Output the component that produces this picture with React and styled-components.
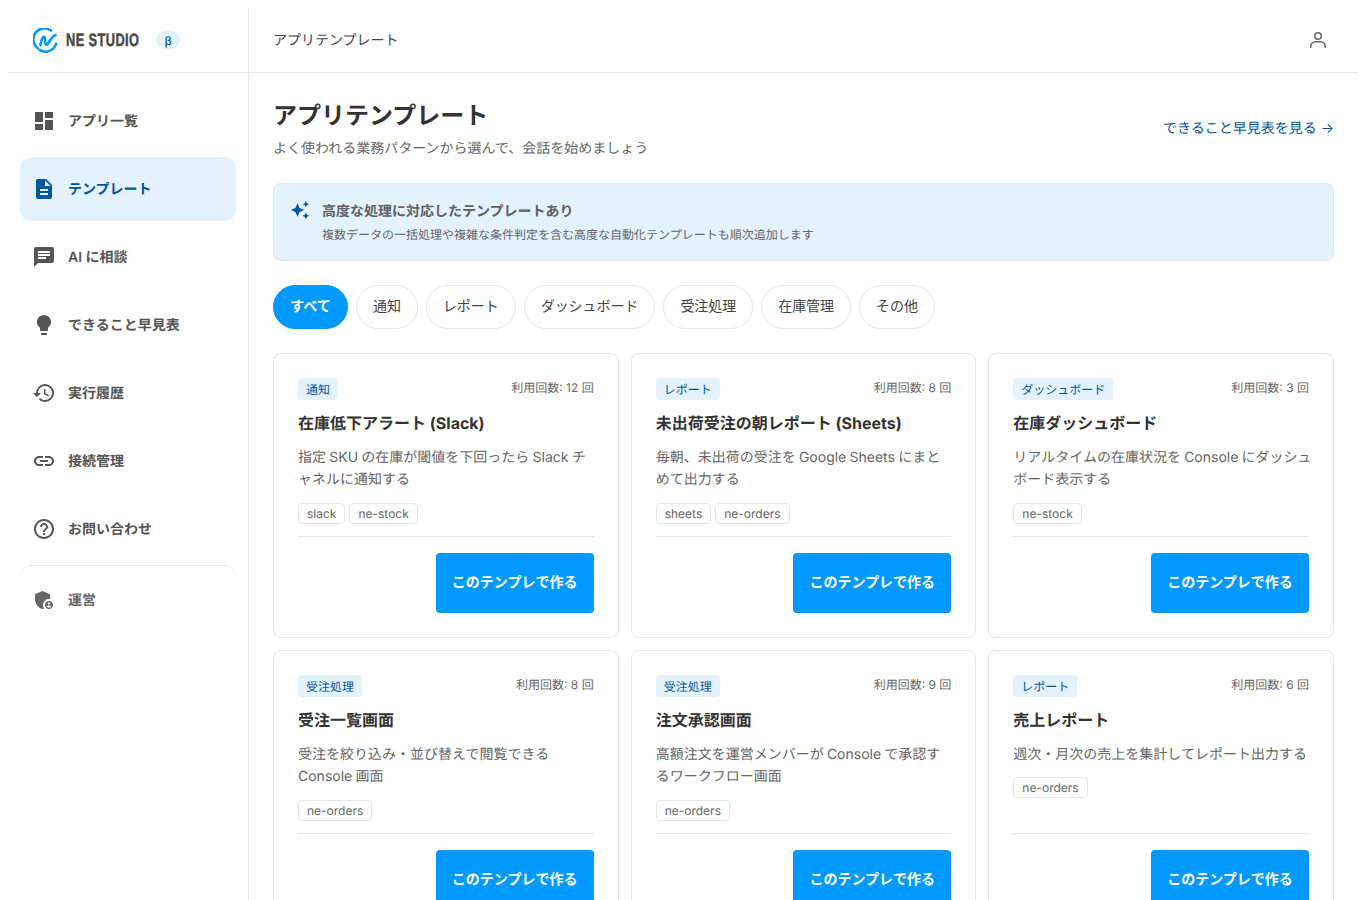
import React from 'react'
import styled, { createGlobalStyle } from 'styled-components'
import { MdDashboard, MdDescription, MdChat, MdLightbulb, MdHistory, MdLink, MdHelpOutline, MdAdminPanelSettings, MdAutoAwesome } from 'react-icons/md'

const GlobalStyle = createGlobalStyle`
  html, body {
    background: #ffffff;
    overflow: hidden;
  }
  body {
    margin: 8px 8px 0;
    font-family: Inter, "Noto Sans CJK JP", sans-serif;
    color: #333333;
    text-rendering: geometricPrecision;
  }
  * { box-sizing: border-box; }
`

const Shell = styled.div`
  display: flex;
  height: calc(100vh - 8px);
  overflow: hidden;
`
const Sidebar = styled.aside`
  flex: 0 0 241px;
  border-right: 1px solid #dfe6ec;
`
const LogoBar = styled.div`
  display: flex;
  align-items: center;
  height: 65px;
  padding-left: 25px;
  border-bottom: 1px solid #dfe6ec;
`
const LogoText = styled.span`
  display: inline-block;
  width: 73px;
  margin-left: 8px;
  font-family: "Liberation Sans", sans-serif;
  font-size: 18px;
  font-weight: 700;
  letter-spacing: 0.6px;
  white-space: nowrap;
  color: #4a4a4a;
  -webkit-text-stroke: 0.5px #4a4a4a;
  transform: scaleX(0.71);
  transform-origin: left center;
`
const Beta = styled.span`
  display: flex;
  align-items: center;
  justify-content: center;
  width: 24px;
  height: 18px;
  margin-left: 17px;
  border-radius: 9px;
  background: #e3f2fd;
  color: #01579b;
  font-size: 12px;
  font-weight: 500;
`
const Nav = styled.nav`
  display: flex;
  flex-direction: column;
  gap: 4px;
  padding: 16px 12px 0;
`
const NavItem = styled.div`
  display: flex;
  align-items: center;
  gap: 12px;
  height: 64px;
  padding-left: 12px;
  border-radius: 12px;
  font-size: 14px;
  font-weight: 600;
  background: ${p => (p.$active ? '#e3f2fd' : 'transparent')};
  color: ${p => (p.$active ? '#01579b' : '#555555')};
  svg { flex: none; width: 24px; height: 24px; }
  span { margin-bottom: 1px; }
`
const AdminBlock = styled.div`
  padding-top: 2px;
  border-top: 1px solid #dfe6ec;
  border-radius: 12px;
  ${NavItem} { color: #666666; }
`
const Main = styled.main`
  flex: 1;
  min-width: 0;
`
const TopBar = styled.header`
  display: flex;
  align-items: center;
  justify-content: space-between;
  height: 65px;
  padding: 0 28px 0 24px;
  border-bottom: 1px solid #dfe6ec;
  font-size: 14px;
  color: #444444;
  span { margin-bottom: 1px; }
`
const Content = styled.div`
  padding: 24px;
`
const PageHead = styled.div`
  display: flex;
  align-items: center;
  justify-content: space-between;
`
const PageTitle = styled.h1`
  margin: 1px 0 4px;
  font-size: 24px;
  line-height: 36px;
  font-weight: 700;
  color: #333333;
`
const PageSub = styled.p`
  margin: 0;
  font-size: 14px;
  line-height: 22px;
  color: #666666;
`
const HeadLink = styled.a`
  margin-bottom: 1px;
  font-size: 14px;
  font-weight: 400;
  color: #01579b;
  text-decoration: none;
`
const Banner = styled.div`
  display: flex;
  align-items: flex-start;
  gap: 12px;
  height: 78px;
  margin-top: 23px;
  padding: 17px 16px 0;
  border: 1px solid #dfe6ec;
  border-radius: 8px;
  background: #e3f2fd;
  svg { flex: none; width: 20px; height: 20px; margin-top: -1px; color: #01579b; }
`
const BannerTitle = styled.div`
  font-size: 14px;
  line-height: 22px;
  font-weight: 700;
  color: #616161;
`
const BannerText = styled.div`
  margin-top: 2px;
  font-size: 12px;
  line-height: 20px;
  color: #666666;
`
const Filters = styled.div`
  display: flex;
  gap: 8px;
  margin: 24px 0;
`
const Chip = styled.button`
  height: 44px;
  min-width: ${p => (p.$active ? '75px' : '0')};
  padding: 0 16px 5px;
  border-radius: 22px;
  border: 1px solid ${p => (p.$active ? '#0099ff' : '#dfe6ec')};
  background: ${p => (p.$active ? '#0099ff' : '#ffffff')};
  color: ${p => (p.$active ? '#ffffff' : '#444444')};
  font-family: inherit;
  font-size: 14px;
  letter-spacing: -0.05px;
  font-weight: ${p => (p.$active ? 700 : 400)};
`
const CardGrid = styled.div`
  display: grid;
  grid-template-columns: repeat(3, minmax(0, 1fr));
  gap: 12px;
`
const Card = styled.article`
  display: flex;
  flex-direction: column;
  height: 285px;
  padding: 24px;
  border: 1px solid #dfe6ec;
  border-radius: 8px;
  background: #ffffff;
`
const CardTop = styled.div`
  display: flex;
  align-items: flex-start;
  justify-content: space-between;
`
const Category = styled.span`
  height: 22px;
  padding: 1px 8px 0;
  border-radius: 4px;
  background: #e3f2fd;
  color: #01579b;
  font-size: 12px;
  line-height: 21px;
`
const Usage = styled.span`
  margin-top: 1px;
  font-size: 12px;
  line-height: 18px;
  color: #666666;
`
const CardTitle = styled.h2`
  margin: 11px 0 0;
  font-size: 16px;
  line-height: 24px;
  font-weight: 700;
  color: #333333;
`
const CardDesc = styled.p`
  margin: 12px 0 0;
  font-size: 14px;
  line-height: 22.4px;
  word-spacing: -0.7px;
  white-space: pre;
  color: #666666;
`
const TagRow = styled.div`
  display: flex;
  gap: 4px;
  margin-top: 11px;
`
const Tag = styled.span`
  height: 21px;
  padding: 0 8px;
  border: 1px solid #dfe6ec;
  border-radius: 4px;
  font-size: 12px;
  line-height: 19px;
  color: #666666;
`
const CardFoot = styled.div`
  display: flex;
  justify-content: flex-end;
  margin-top: auto;
  padding-top: 16px;
  border-top: 1px solid #dfe6ec;
`
const MakeButton = styled.button`
  width: 158px;
  height: 60px;
  padding: 0 0 4px;
  border: 0;
  border-radius: 4px;
  background: #0099ff;
  color: #ffffff;
  font-family: inherit;
  font-size: 14px;
  font-weight: 700;
`

const navItems = [
  { label: 'アプリ一覧', Icon: MdDashboard },
  { label: 'テンプレート', Icon: MdDescription, active: true },
  { label: 'AI に相談', Icon: MdChat },
  { label: 'できること早見表', Icon: MdLightbulb },
  { label: '実行履歴', Icon: MdHistory },
  { label: '接続管理', Icon: MdLink },
  { label: 'お問い合わせ', Icon: MdHelpOutline },
]

const filters = ['すべて', '通知', 'レポート', 'ダッシュボード', '受注処理', '在庫管理', 'その他']

const templates = [
  { id: 1, category: '通知', usage: 12, title: '在庫低下アラート (Slack)', desc: '指定 SKU の在庫が閾値を下回ったら Slack チ\nャネルに通知する', tags: ['slack', 'ne-stock'] },
  { id: 2, category: 'レポート', usage: 8, title: '未出荷受注の朝レポート (Sheets)', desc: '毎朝、未出荷の受注を Google Sheets にまと\nめて出力する', tags: ['sheets', 'ne-orders'] },
  { id: 3, category: 'ダッシュボード', usage: 3, title: '在庫ダッシュボード', desc: 'リアルタイムの在庫状況を Console にダッシュ\nボード表示する', tags: ['ne-stock'] },
  { id: 4, category: '受注処理', usage: 8, title: '受注一覧画面', desc: '受注を絞り込み・並び替えで閲覧できる\nConsole 画面', tags: ['ne-orders'] },
  { id: 5, category: '受注処理', usage: 9, title: '注文承認画面', desc: '高額注文を運営メンバーが Console で承認す\nるワークフロー画面', tags: ['ne-orders'] },
  { id: 6, category: 'レポート', usage: 6, title: '売上レポート', desc: '週次・月次の売上を集計してレポート出力する', tags: ['ne-orders'] },
]

function Logo() {
  return (
    <svg width="25" height="25" viewBox="0 0 25 25" fill="none" stroke="#0099ff" strokeWidth="2.5" strokeLinecap="round">
      <path d="M18 2.6A11 11 0 0 0 4.7 20.2" />
      <path d="M6.6 21.9A11 11 0 0 0 23.1 15.6" />
      <path d="M7.4 17.2C8.2 12.5 9.8 8.6 11.3 8.8C13 9 11.2 16.4 13.2 16.8C15.4 17.2 17.5 8.5 22.6 7" />
    </svg>
  )
}

function UserIcon() {
  return (
    <svg width="24" height="24" viewBox="0 0 24 24" fill="none" stroke="#666666" strokeWidth="1.6" strokeLinecap="round">
      <circle cx="12" cy="8" r="3.3" />
      <path d="M4.8 19.2v-.9a4.5 4.5 0 0 1 4.5-4.5h5.4a4.5 4.5 0 0 1 4.5 4.5v.9" />
    </svg>
  )
}

function App() {
  return (
    <>
      <GlobalStyle />
      <Shell>
        <Sidebar>
          <LogoBar>
            <Logo />
            <LogoText>NE STUDIO</LogoText>
            <Beta>β</Beta>
          </LogoBar>
          <Nav>
            {navItems.map(({ label, Icon, active }) => (
              <NavItem key={label} $active={active}>
                <Icon />
                <span>{label}</span>
              </NavItem>
            ))}
            <AdminBlock>
              <NavItem>
                <MdAdminPanelSettings />
                <span>運営</span>
              </NavItem>
            </AdminBlock>
          </Nav>
        </Sidebar>
        <Main>
          <TopBar>
            <span>アプリテンプレート</span>
            <UserIcon />
          </TopBar>
          <Content>
            <PageHead>
              <div>
                <PageTitle>アプリテンプレート</PageTitle>
                <PageSub>よく使われる業務パターンから選んで、会話を始めましょう</PageSub>
              </div>
              <HeadLink href="#">できること早見表を見る →</HeadLink>
            </PageHead>
            <Banner>
              <MdAutoAwesome />
              <div>
                <BannerTitle>高度な処理に対応したテンプレートあり</BannerTitle>
                <BannerText>複数データの一括処理や複雑な条件判定を含む高度な自動化テンプレートも順次追加します</BannerText>
              </div>
            </Banner>
            <Filters>
              {filters.map((f, i) => (
                <Chip key={f} $active={i === 0}>{f}</Chip>
              ))}
            </Filters>
            <CardGrid>
              {templates.map(t => (
                <Card key={t.id}>
                  <CardTop>
                    <Category>{t.category}</Category>
                    <Usage>利用回数: {t.usage} 回</Usage>
                  </CardTop>
                  <CardTitle>{t.title}</CardTitle>
                  <CardDesc>{t.desc}</CardDesc>
                  <TagRow>
                    {t.tags.map(tag => <Tag key={tag}>{tag}</Tag>)}
                  </TagRow>
                  <CardFoot>
                    <MakeButton>このテンプレで作る</MakeButton>
                  </CardFoot>
                </Card>
              ))}
            </CardGrid>
          </Content>
        </Main>
      </Shell>
    </>
  )
}

export default App
